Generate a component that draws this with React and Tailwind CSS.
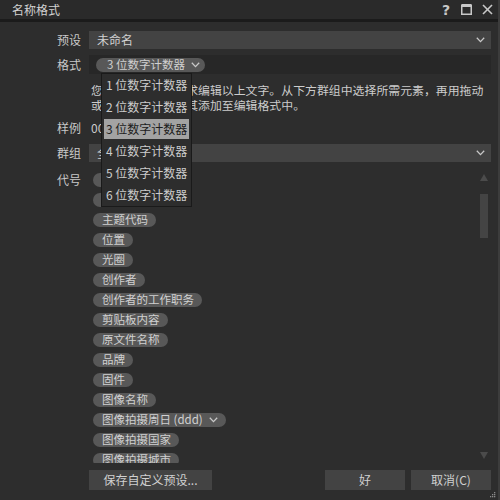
import React from 'react';

const font = { fontFamily: '"Noto Sans CJK SC", "Noto Sans", sans-serif' };

const Chevron = ({ className = 'w-[9px] h-[6px]' }) => (
  <svg viewBox="0 0 9 6" className={className} fill="none" stroke="#c8c8c8" strokeWidth="1.3">
    <polyline points="0.8,0.8 4.5,4.6 8.2,0.8" />
  </svg>
);

const tokens = [
  '版权',
  '标题',
  '主题代码',
  '位置',
  '光圈',
  '创作者',
  '创作者的工作职务',
  '剪贴板内容',
  '原文件名称',
  '品牌',
  '固件',
  '图像名称',
  '图像拍摄周日 (ddd)',
  '图像拍摄国家',
  '图像拍摄城市',
];

const counters = ['1 位数字计数器', '2 位数字计数器', '3 位数字计数器', '4 位数字计数器', '5 位数字计数器', '6 位数字计数器'];

const Label = ({ children }) => (
  <div className="w-[81px] shrink-0 text-right text-[12px] text-[#c8c8c8] leading-[18px]">{children}</div>
);

const App = () => {
  return (
    <div className="relative w-[500px] h-[500px] bg-[#2d2d2d] flex flex-col overflow-hidden border-r-[2px] border-r-[#3c3c3c]" style={font}>
      {/* Title bar */}
      <div className="h-[22px] shrink-0 flex items-center justify-between pl-[12px] pr-[5px] bg-[#2a2a2a] border-b-[3px] border-[#1b1b1b]">
        <span className="text-[12px] text-[#d2d2d2] leading-none">名称格式</span>
        <div className="flex items-center gap-[10px]">
          <span className="text-[14px] font-bold text-[#c8c8c8] leading-none w-[10px] text-center" style={{ fontFamily: '"DejaVu Sans", sans-serif' }}>?</span>
          <svg viewBox="0 0 11 11" className="w-[11px] h-[11px]" fill="none" stroke="#c8c8c8">
            <rect x="0.75" y="1.5" width="9.5" height="8.75" strokeWidth="1.5" />
            <line x1="0.5" y1="1.5" x2="10.5" y2="1.5" strokeWidth="3" />
          </svg>
          <svg viewBox="0 0 11 11" className="w-[11px] h-[11px]" fill="none" stroke="#c8c8c8" strokeWidth="1.6">
            <line x1="1" y1="1" x2="10" y2="10" />
            <line x1="10" y1="1" x2="1" y2="10" />
          </svg>
        </div>
      </div>

      <div className="flex flex-col pr-[7px] pt-[9px]">
        {/* 预设 */}
        <div className="flex items-center gap-[8px]">
          <Label>预设</Label>
          <div className="flex-1 h-[18px] bg-[#434343] flex items-center justify-between pl-[8px] pr-[6px]">
            <span className="text-[12px] text-[#d2d2d2]">未命名</span>
            <Chevron />
          </div>
        </div>

        {/* 格式 */}
        <div className="flex items-center gap-[8px] mt-[6px]">
          <Label>格式</Label>
          <div className="flex-1 h-[19px] bg-[#272727] flex items-center pl-[7px]">
            <div className="h-[14px] rounded-full bg-[#585858] flex items-center gap-[6px] pl-[11px] pr-[5px]">
              <span className="text-[11.5px] text-[#d0d0d0] leading-none">3 位数字计数器</span>
              <Chevron />
            </div>
          </div>
        </div>

        {/* description */}
        <div className="pl-[91px] mt-[8px] text-[11.9px] leading-[15px] text-[#cccccc] whitespace-nowrap">
          <div>您可以按照您的需求编辑以上文字。从下方群组中选择所需元素，再用拖动</div>
          <div>或直接双击元素将其添加至编辑格式中。</div>
        </div>

        {/* 样例 */}
        <div className="flex items-center gap-[8px] mt-[7px]">
          <Label>样例</Label>
          <span className="pl-[2px] text-[12px] text-[#cccccc] leading-[18px]">001</span>
        </div>

        {/* 群组 */}
        <div className="flex items-center gap-[8px] mt-[7px]">
          <Label>群组</Label>
          <div className="flex-1 h-[18px] bg-[#434343] flex items-center justify-between pl-[8px] pr-[6px]">
            <span className="text-[12px] text-[#d2d2d2]">全部</span>
            <Chevron />
          </div>
        </div>

        {/* 代号 */}
        <div className="flex gap-[8px] mt-[9px]">
          <div className="w-[81px] shrink-0 text-right text-[12px] text-[#c8c8c8] leading-[18px]">代号</div>
          <div className="flex-1 h-[292px] flex overflow-hidden">
            <div className="flex-1 flex flex-col items-start gap-[6px] pt-[2px] pl-[4px]">
              {tokens.map((t) => (
                <div key={t} className="h-[14px] shrink-0 rounded-full bg-[#585858] flex items-center gap-[6px] pl-[9px] pr-[8px]">
                  <span className="text-[11.5px] text-[#d0d0d0] leading-none whitespace-nowrap">{t}</span>
                  {t.includes('(ddd)') && <Chevron />}
                </div>
              ))}
            </div>
            <div className="w-[8px] mr-[3px] flex flex-col items-center pt-[3px]">
              <svg viewBox="0 0 8 7" className="w-[8px] h-[7px]" fill="#4b4b4b">
                <polygon points="4,0 8,7 0,7" />
              </svg>
              <div className="w-[8px] h-[44px] bg-[#444444] mt-[13px]" />
              <div className="flex-1" />
              <svg viewBox="0 0 8 7" className="w-[8px] h-[7px] mb-[4px]" fill="#4b4b4b">
                <polygon points="0,0 8,0 4,7" />
              </svg>
            </div>
          </div>
        </div>

        {/* buttons */}
        <div className="flex items-center mt-[7px] pl-[89px] gap-[6px]">
          <button className="h-[20px] w-[123px] bg-[#434343] text-[12px] text-[#d0d0d0]">保存自定义预设...</button>
          <div className="flex-1" />
          <button className="h-[20px] w-[80px] bg-[#434343] text-[12px] text-[#d0d0d0]">好</button>
          <button className="h-[20px] w-[80px] bg-[#434343] text-[12px] text-[#d0d0d0]">取消(C)</button>
        </div>
      </div>

      {/* resize grip */}
      <svg viewBox="0 0 6 6" className="absolute right-[2px] bottom-[2px] w-[6px] h-[6px]" fill="#8a8a8a">
        <rect x="4" y="0" width="1.3" height="1.3" />
        <rect x="2" y="2" width="1.3" height="1.3" />
        <rect x="4" y="2" width="1.3" height="1.3" />
        <rect x="0" y="4" width="1.3" height="1.3" />
        <rect x="2" y="4" width="1.3" height="1.3" />
        <rect x="4" y="4" width="1.3" height="1.3" />
      </svg>

      {/* open dropdown menu */}
      <div className="absolute left-[101px] top-[73px] w-[91px] bg-[#2d2d2d] border border-[#1a1a1a] flex flex-col">
        {counters.map((c, i) => (
          <div
            key={c}
            className={
              i === 2
                ? 'h-[20px] my-[1px] mx-[2px] px-[2px] flex items-center bg-[#a3a3a3] text-[#1c1c1c] text-[12px] whitespace-nowrap'
                : 'h-[20px] my-[1px] mx-[2px] px-[2px] flex items-center text-[#cccccc] text-[12px] whitespace-nowrap'
            }
          >
            {c}
          </div>
        ))}
      </div>
    </div>
  );
};

export default App;
